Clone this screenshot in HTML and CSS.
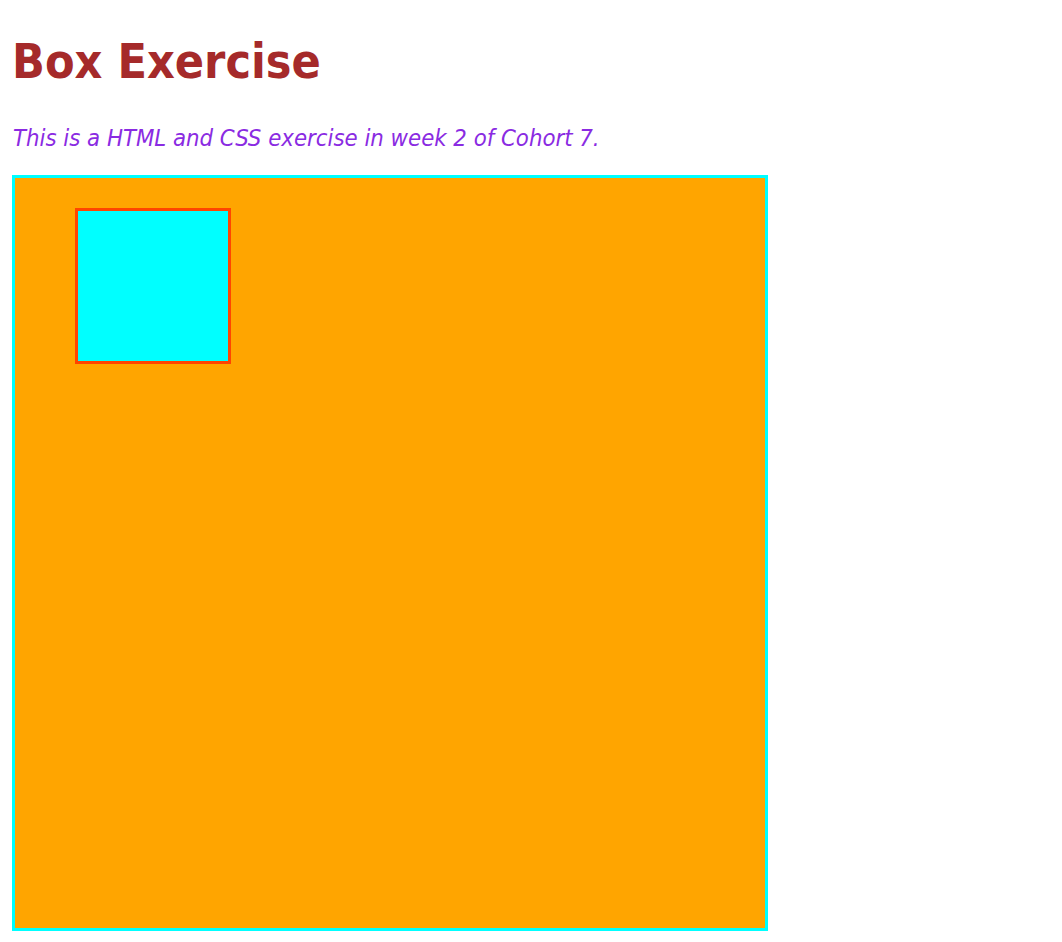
FILE: index.html
```html
<!DOCTYPE html>
<html>
<head>
<meta charset="utf-8">
<title>Box Exercise</title>
<link rel="stylesheet" href="styles.css">
</head>
<body>
<h1 class="title">Box Exercise</h1>
<p class="intro">This is a HTML and CSS exercise in week 2 of Cohort 7.</p>
<div class="outer">
  <div class="inner"></div>
</div>
</body>
</html>
```
FILE: styles.css
```css
body {
  margin: 0;
  padding: 0 12px;
  font-family: "DejaVu Sans Condensed", "DejaVu Sans", sans-serif;
  background: #fff;
}
.title {
  color: #a52a2a;
  font-size: 48px;
  font-weight: bold;
  line-height: 56px;
  margin: 33px 0 0 0;
}
.intro {
  color: #8a2be2;
  font-style: italic;
  font-size: 23.7px;
  line-height: 28px;
  margin: 35px 0 23px 0;
  padding-left: 1px;
}
.outer {
  width: 750px;
  height: 750px;
  border: 3px solid #00ffff;
  background: #ffa500;
}
.inner {
  width: 150px;
  height: 150px;
  margin: 30px 60px;
  border: 3px solid #ff4500;
  background: #00ffff;
}
```
